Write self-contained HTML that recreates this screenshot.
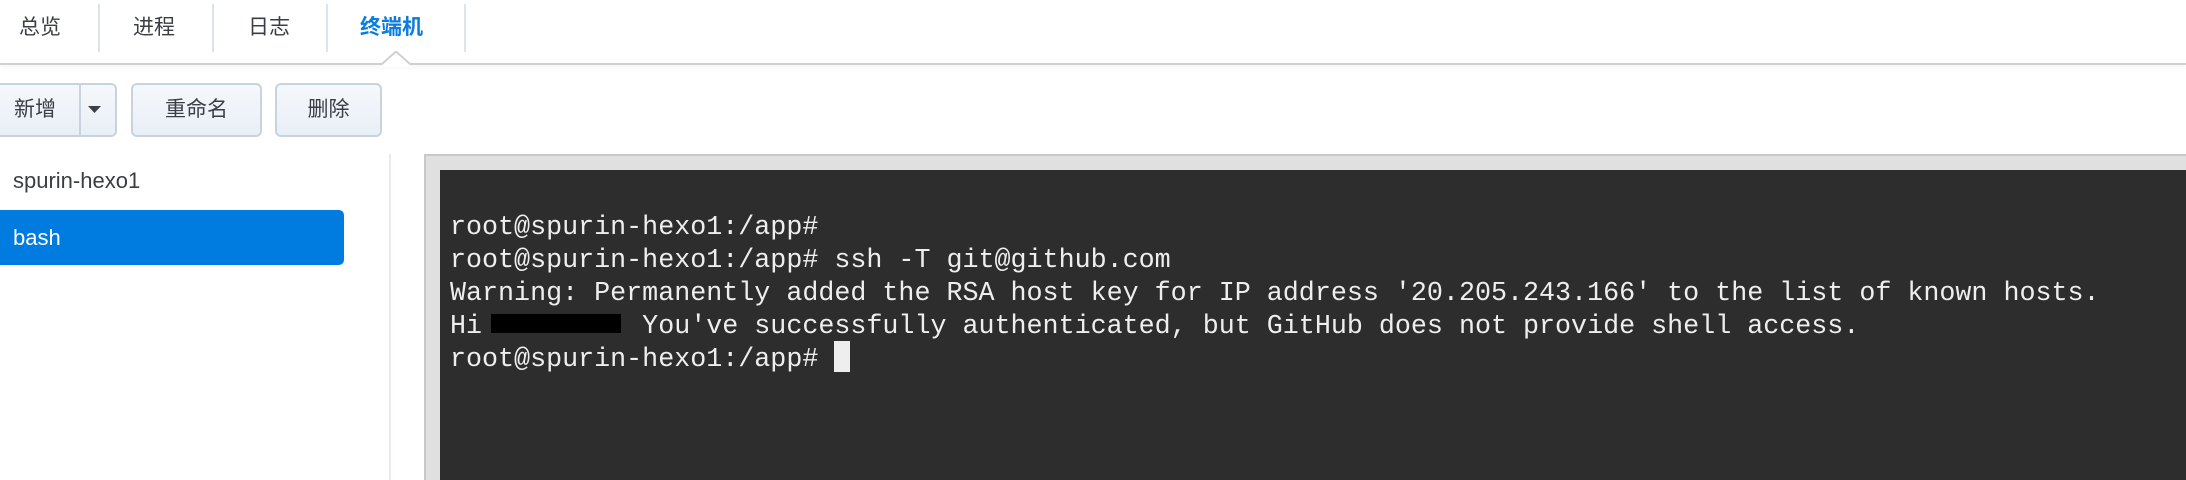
<!DOCTYPE html>
<html><head><meta charset="utf-8"><style>
*{margin:0;padding:0;box-sizing:border-box}
body{width:2186px;height:480px;background:#fff;position:relative;overflow:hidden;font-family:"Liberation Sans","Noto Sans CJK SC",sans-serif;color:#333}
.tab{position:absolute;top:10px;font-size:21px;line-height:36px;color:#3b3f45}
.div{position:absolute;top:4px;width:2px;height:48px;background:#dde4ec}
.bar{position:absolute;left:0;top:63px;width:2186px;height:2px;background:#d0d0d0;box-shadow:0 2px 3px rgba(0,0,0,.06)}
.btn{position:absolute;top:83px;height:54px;border:2px solid #c9d3dd;border-radius:6px;background:linear-gradient(#f5f8fc,#e9eff7);font-size:21px;line-height:50px;text-align:center;color:#3b3f45}
.term{position:absolute;left:440px;top:170px;width:1746px;height:310px;background:#2d2d2d}
pre{position:absolute;left:450px;top:212px;font-family:"Liberation Mono","Courier New",monospace;font-size:26.7px;line-height:33px;color:#eee}
</style></head><body>
<div class="tab" style="left:19px">总览</div>
<div class="div" style="left:98px"></div>
<div class="tab" style="left:133px">进程</div>
<div class="div" style="left:212px"></div>
<div class="tab" style="left:248px">日志</div>
<div class="div" style="left:326px"></div>
<div class="tab" style="left:360px;color:#0a7be0;font-weight:bold">终端机</div>
<div class="div" style="left:464px"></div>
<div class="bar"></div>
<svg style="position:absolute;left:382px;top:51px" width="28" height="16"><path d="M0 14 L14 1 L28 14 L28 16 L0 16Z" fill="#fff"/><path d="M0 13 L14 0.5 L28 13" stroke="#d0d0d0" stroke-width="2" fill="none"/></svg>
<div class="btn" style="left:-6px;width:123px"><span style="position:absolute;left:18px">新增</span><span style="position:absolute;left:83px;top:0;width:2px;height:50px;background:#c9d3dd"></span><svg style="position:absolute;left:92px;top:21px" width="14" height="8"><path d="M0 0H13L6.5 7Z" fill="#3b3f45"/></svg></div>
<div class="btn" style="left:131px;width:131px">重命名</div>
<div class="btn" style="left:275px;width:107px">删除</div>
<div style="position:absolute;left:13px;top:166px;font-size:22px;line-height:30px;color:#3b3f45">spurin-hexo1</div>
<div style="position:absolute;left:0;top:210px;width:344px;height:55px;background:#007be0;border-radius:0 5px 5px 0;color:#fff;font-size:22px;line-height:55px;padding-left:13px">bash</div>
<div style="position:absolute;left:389px;top:154px;width:2px;height:326px;background:#e6e9ee"></div>
<div style="position:absolute;left:424px;top:154px;width:1762px;height:326px;background:#e0e0e0;border-top:2px solid #c8c8c8;border-left:2px solid #c8c8c8"></div>
<div class="term"></div>
<pre>root@spurin-hexo1:/app#
root@spurin-hexo1:/app# ssh -T git@github.com
Warning: Permanently added the RSA host key for IP address '20.205.243.166' to the list of known hosts.
Hi          You've successfully authenticated, but GitHub does not provide shell access.
root@spurin-hexo1:/app# </pre>
<div style="position:absolute;left:491px;top:314px;width:130px;height:19px;background:#000"></div>
<div style="position:absolute;left:834px;top:341px;width:16px;height:31px;background:#eee"></div>
</body></html>
